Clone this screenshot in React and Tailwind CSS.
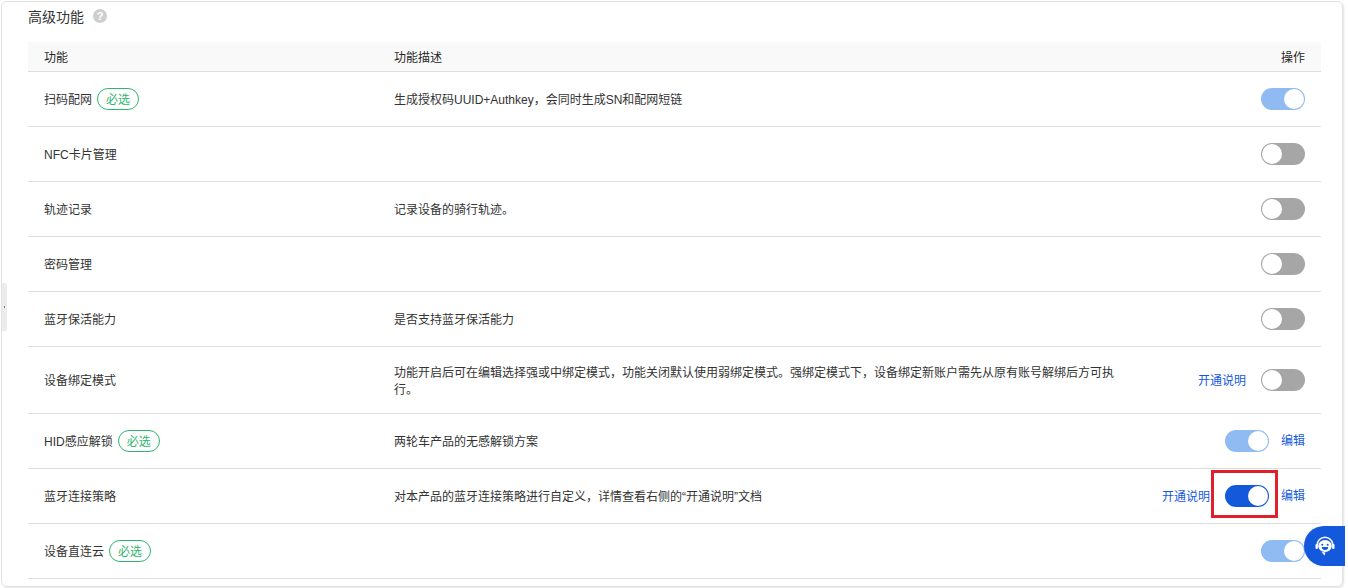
const font = { fontFamily: '"Liberation Sans", "Noto Sans CJK SC", sans-serif' };

function Toggle({ state }) {
  const track = state === "on" ? "bg-[#1459dc]" : state === "soft" ? "bg-[#8fbaf2]" : "bg-[#a6a6a6]";
  const justify = state === "off" ? "justify-start" : "justify-end";
  return (
    <span className={`flex h-[22px] w-[44px] shrink-0 items-center rounded-full p-px ${track} ${justify}`}>
      <span className="h-5 w-5 rounded-full bg-white" />
    </span>
  );
}

function Tag() {
  return (
    <span className="ml-[5px] flex h-[22px] w-[42px] items-center justify-center rounded-full border border-[#2fb56d] pt-px text-[12px] text-[#2fb56d]">
      必选
    </span>
  );
}

function Row({ name, tag, desc, toggle, guide, edit, tall }) {
  return (
    <div className={`flex items-center border-b border-[#dedede] ${tall ? "h-[67px]" : "h-[55px]"}`}>
      <div className="flex w-[366px] shrink-0 items-center pl-4">
        <span className="pt-[2px]">{name}</span>
        {tag && <Tag />}
      </div>
      <div className="w-[720px] shrink-0 pt-[3px] leading-[17px]">{desc}</div>
      <div className="flex flex-1 items-center justify-end pr-4">
        {guide && <a className="mr-[15px] pt-[2px] text-[#1459dc]">开通说明</a>}
        <Toggle state={toggle} />
        {edit && <a className="ml-3 text-[#1459dc]">编辑</a>}
      </div>
    </div>
  );
}

const rows = [
  { name: "扫码配网", tag: true, desc: "生成授权码UUID+Authkey，会同时生成SN和配网短链", toggle: "soft" },
  { name: "NFC卡片管理", desc: "", toggle: "off" },
  { name: "轨迹记录", desc: "记录设备的骑行轨迹。", toggle: "off" },
  { name: "密码管理", desc: "", toggle: "off" },
  { name: "蓝牙保活能力", desc: "是否支持蓝牙保活能力", toggle: "off" },
  { name: "设备绑定模式", desc: "功能开启后可在编辑选择强或中绑定模式，功能关闭默认使用弱绑定模式。强绑定模式下，设备绑定新账户需先从原有账号解绑后方可执行。", toggle: "off", guide: true, tall: true },
  { name: "HID感应解锁", tag: true, desc: "两轮车产品的无感解锁方案", toggle: "soft", edit: true },
  { name: "蓝牙连接策略", desc: "对本产品的蓝牙连接策略进行自定义，详情查看右侧的“开通说明”文档", toggle: "on", guide: true, edit: true },
  { name: "设备直连云", tag: true, desc: "", toggle: "soft" },
];

export default function App() {
  return (
    <div className="relative h-[588px] w-[1348px] overflow-hidden bg-white text-[12px] text-[#333333]" style={font}>
      <div className="absolute left-[2px] top-[283px] flex h-[48px] w-[5px] items-center justify-center rounded-r-[2px] bg-[#ececec]">
        <span className="h-[2px] w-px bg-[#777777]" />
      </div>
      <div className="ml-px mt-px h-[586px] w-[1342px] rounded-[6px] border border-[#e2e2e2] px-[26px] shadow-[1px_1px_2px_rgba(0,0,0,0.12)]">
        <div className="flex h-[40px] items-start pt-[4px]">
          <span className="text-[14px] leading-[22px]">高级功能</span>
          <span className="ml-[9px] mt-[3px] flex h-[14px] w-[14px] items-center justify-center rounded-full bg-[#cfcfcf] text-[11px] font-bold leading-none text-white">?</span>
        </div>
        <div className="w-[1293px]">
          <div className="flex h-[30px] items-center border-b border-[#dedede] bg-[#f9f9f9] pt-[2px] text-[#262626]">
            <div className="w-[366px] pl-4">功能</div>
            <div className="flex-1">功能描述</div>
            <div className="pr-4">操作</div>
          </div>
          {rows.map((r) => <Row key={r.name} {...r} />)}
        </div>
      </div>
      <div className="absolute left-[1211px] top-[470px] h-[48px] w-[67px] border-[3px] border-[#e01f2d]" />
      <div className="absolute left-[1304px] top-[526px] flex h-[40px] w-[41px] items-center justify-center rounded-l-[20px] bg-[#1459dc]">
        <svg width="20" height="20" viewBox="0 0 20 20" fill="none">
          <path d="M2.200 9a7.800 7.800 0 0 1 15.600 0" stroke="#fff" strokeWidth="1.500" />
          <rect x="0.500" y="8" width="2.400" height="5" rx="1.100" fill="#fff" />
          <rect x="17.100" y="8" width="2.400" height="5" rx="1.100" fill="#fff" />
          <ellipse cx="10" cy="10" rx="6.800" ry="6" fill="#fff" />
          <path d="M6.500 16l3 3.500 1-3z" fill="#fff" />
          <circle cx="7.300" cy="8.800" r="1" fill="#1459dc" />
          <circle cx="12.700" cy="8.800" r="1" fill="#1459dc" />
          <path d="M6.800 11h6.400a3.200 3 0 0 1-6.400 0z" fill="#1459dc" />
        </svg>
      </div>
    </div>
  );
}
